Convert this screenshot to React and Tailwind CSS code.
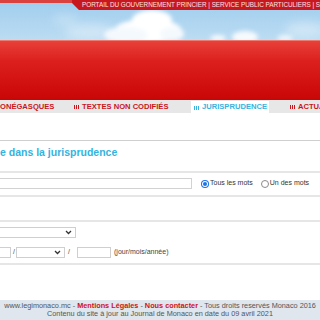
import React from "react";

function Bars({ color }) {
  return (
    <span className="inline-flex items-end gap-[1px] mr-[3px] h-[5px] shrink-0">
      <span className={`w-[1px] h-[4px] ${color}`} />
      <span className={`w-[1px] h-[4px] ${color}`} />
      <span className={`w-[1px] h-[4px] ${color}`} />
    </span>
  );
}

function Chevron() {
  return (
    <svg width="7" height="5" viewBox="0 0 7 5" className="shrink-0">
      <polyline points="1,1 3.5,3.5 6,1" fill="none" stroke="#333" strokeWidth="1.3" />
    </svg>
  );
}

export default function App() {
  return (
    <div className="w-[320px] h-[320px] overflow-hidden bg-white flex flex-col font-['Liberation_Sans',Arial,sans-serif]">
      {/* sky header */}
      <div className="relative h-[40px] shrink-0 bg-[#a9d3f0] overflow-hidden">
        <svg className="absolute inset-0" width="320" height="40" viewBox="0 0 320 40">
          <defs>
            <linearGradient id="sky" x1="0" y1="0" x2="0" y2="1">
              <stop offset="0" stopColor="#9fcdee" />
              <stop offset="1" stopColor="#bcdcf2" />
            </linearGradient>
            <filter id="blur" x="-50%" y="-50%" width="200%" height="200%">
              <feGaussianBlur stdDeviation="2.2" />
            </filter>
            <filter id="blur2" x="-50%" y="-50%" width="200%" height="200%">
              <feGaussianBlur stdDeviation="5" />
            </filter>
          </defs>
          <rect width="320" height="40" fill="url(#sky)" />
          <g filter="url(#blur2)" opacity="0.5">
            <ellipse cx="90" cy="32" rx="25" ry="8" fill="#e8f3fb" />
            <ellipse cx="305" cy="30" rx="20" ry="8" fill="#e8f3fb" />
            <ellipse cx="65" cy="20" rx="12" ry="5" fill="#d8ebf8" />
          </g>
          <g filter="url(#blur)">
            <ellipse cx="148" cy="31" rx="34" ry="12" fill="#ffffff" />
            <ellipse cx="152" cy="20" rx="20" ry="10" fill="#ffffff" />
            <ellipse cx="126" cy="35" rx="22" ry="8" fill="#f4f9fd" />
            <ellipse cx="172" cy="34" rx="12" ry="7" fill="#f4f9fd" />
            <ellipse cx="245" cy="37" rx="13" ry="6" fill="#f6fafd" />
            <ellipse cx="218" cy="38" rx="8" ry="3" fill="#f6fafd" />
            <ellipse cx="285" cy="38" rx="8" ry="3" fill="#eef6fc" />
          </g>
          <polygon points="0,0 320,0 320,10 79,10 72,3 0,3" fill="#c8181f" />
          <polygon points="0,0 72,0 72,3 0,3" fill="#d9423e" />
        </svg>
        <div className="absolute left-[82px] top-[1px] h-[9px] flex items-center whitespace-nowrap text-[6.4px] leading-none text-[#fbe1e1] tracking-[-0.05px]">
          PORTAIL DU GOUVERNEMENT PRINCIER | SERVICE PUBLIC PARTICULIERS | SERVICE PUBLIC ENTREPRISES
        </div>
      </div>

      {/* red banner */}
      <div className="h-[60px] shrink-0 bg-[linear-gradient(180deg,#e8403a_0%,#dc1f1c_35%,#c80606_100%)] border-t border-[#f07a70]" />

      {/* nav */}
      <div className="h-[13px] shrink-0 bg-[#e7e7e7] flex items-stretch whitespace-nowrap text-[7.6px] font-bold leading-none text-[#c9161d] overflow-hidden">
        <div className="flex items-center w-[74px] shrink-0">ONÉGASQUES</div>
        <div className="flex items-center w-[117px] shrink-0">
          <Bars color="bg-[#c9161d]" />
          TEXTES NON CODIFIÉS
        </div>
        <div className="flex items-center w-[78px] shrink-0 pl-[3px] bg-white text-[#39b2de] mt-[1px]">
          <Bars color="bg-[#39b2de]" />
          JURISPRUDENCE
        </div>
        <div className="flex items-center pl-[21px] shrink-0">
          <Bars color="bg-[#c9161d]" />
          ACTUALITÉS
        </div>
      </div>

      <div className="h-[27px] shrink-0" />
      <div className="h-[1px] shrink-0 bg-[#cfcfcf]" />

      <div className="mt-[5px] h-[12px] shrink-0 text-[10.5px] leading-[12px] font-bold text-[#33b3e0] whitespace-nowrap">
        e dans la jurisprudence
      </div>

      <div className="mt-[13px] h-[2px] shrink-0 bg-[#e6e6e6]" />

      <div className="mt-[5px] h-[11px] shrink-0 flex items-center whitespace-nowrap text-[7px] text-[#333]">
        <div className="w-[192px] h-[11px] border border-[#d2d2d2] border-l-0 shrink-0" />
        <span className="ml-[9px] w-[8px] h-[8px] rounded-full bg-[#1a73e8] flex items-center justify-center shrink-0">
          <span className="w-[6px] h-[6px] rounded-full bg-white flex items-center justify-center">
            <span className="w-[4px] h-[4px] rounded-full bg-[#1a73e8]" />
          </span>
        </span>
        <span className="ml-[1px]">Tous les mots</span>
        <span className="ml-[8px] w-[8px] h-[8px] rounded-full border border-[#8a8a8a] shrink-0" />
        <span className="ml-[1px]">Un des mots</span>
      </div>

      <div className="mt-[6px] h-[2px] shrink-0 bg-[#e6e6e6]" />
      <div className="mt-[23px] h-[2px] shrink-0 bg-[#e6e6e6]" />

      <div className="mt-[5px] h-[11px] shrink-0 flex items-center">
        <div className="w-[76px] h-[11px] border border-[#cfcfcf] border-l-0 flex items-center justify-end pr-[3px]">
          <Chevron />
        </div>
      </div>

      <div className="mt-[9px] h-[11px] shrink-0 flex items-center whitespace-nowrap text-[7px] text-[#444]">
        <div className="w-[11px] h-[11px] border border-[#cfcfcf] border-l-0 shrink-0" />
        <span className="ml-[2px] w-[3px]">/</span>
        <div className="w-[49px] h-[11px] border border-[#cfcfcf] flex items-center justify-end pr-[3px] shrink-0">
          <Chevron />
        </div>
        <span className="ml-[3px] w-[8px]">/</span>
        <div className="ml-[1px] w-[34px] h-[11px] border border-[#cfcfcf] shrink-0" />
        <span className="ml-[3px]">(jour/mois/année)</span>
      </div>

      <div className="mt-[5px] h-[2px] shrink-0 bg-[#e6e6e6]" />

      <div className="flex-1" />

      <div className="h-[20px] shrink-0 bg-[#dfe6ed] flex flex-col items-center justify-center text-[7.3px] leading-[8px] text-[#555] whitespace-nowrap">
        <div>
          www.legimonaco.mc - <span className="font-bold text-[#d0111b]">Mentions Légales</span> -{" "}
          <span className="font-bold text-[#d0111b]">Nous contacter</span> - Tous droits reservés Monaco 2016
        </div>
        <div>Contenu du site à jour au Journal de Monaco en date du 09 avril 2021</div>
      </div>
    </div>
  );
}
